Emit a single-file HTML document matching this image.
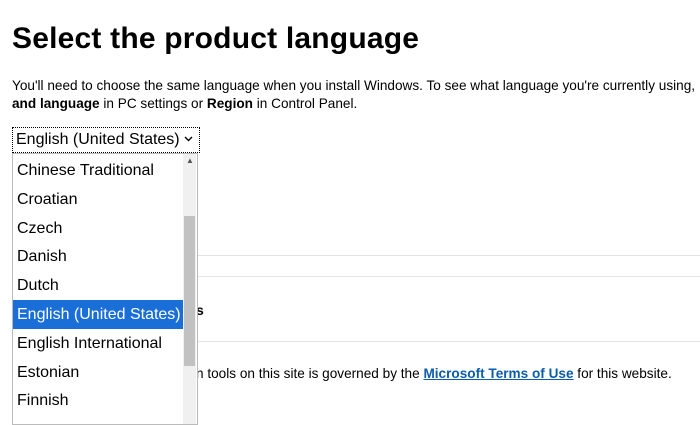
<!DOCTYPE html>
<html><head><style>
body{margin:0;width:700px;height:416px;overflow:hidden;background:#fff;font-family:"Liberation Sans",sans-serif;color:#000;position:relative}
.a{position:absolute;white-space:nowrap}
h1{position:absolute;left:12px;top:22px;margin:0;font-size:30px;font-weight:bold;letter-spacing:0.2px}
.p{font-size:13.6px}
.line{position:absolute;left:196px;right:0;height:1px;background:#e3e3e3}
.sel{position:absolute;left:12px;top:127px;width:183px;height:24px;border:1px dotted #000;font-size:16px;line-height:24px;padding-left:3px;box-sizing:content-box}
.dd{position:absolute;left:12px;top:153px;width:184px;height:270px;border:1px solid #bbb;background:#fff;overflow:hidden}
.it{height:28.8px;line-height:29px;font-size:16px;padding-left:4px;white-space:nowrap}
.hl{background:#1a6ed8;color:#fff}
.sb{position:absolute;left:170px;top:0;width:13px;height:270px;background:#f0f0f0}
.th{position:absolute;left:171px;top:62px;width:11px;height:150px;background:#c1c1c1}
</style></head><body>
<h1>Select the product language</h1>
<div class="a p" style="left:12px;top:78px;width:688px;overflow:hidden">You'll need to choose the same language when you install Windows. To see what language you're currently using,</div>
<div class="a p" style="left:12px;top:96px"><b>and language</b> in PC settings or <b>Region</b> in Control Panel.</div>
<div class="sel">English (United States) <svg width="9" height="6" viewBox="0 0 9 6" style="vertical-align:2px"><path d="M1 1l3.5 3.5L8 1" stroke="#000" stroke-width="1.4" fill="none"/></svg></div>
<div class="line" style="top:255px"></div>
<div class="line" style="top:276px"></div>
<div class="line" style="top:341px"></div>
<div class="a" style="left:196px;top:302px;font-size:14px;font-weight:bold">s</div>
<div class="a p" style="left:196px;top:366px">n tools on this site is governed by the <a style="color:#0b5cad;font-weight:bold;text-decoration:underline">Microsoft Terms of Use</a> for this website.</div>
<div class="dd">
<div class="it" style="margin-top:2px">Chinese Traditional</div>
<div class="it">Croatian</div>
<div class="it">Czech</div>
<div class="it">Danish</div>
<div class="it">Dutch</div>
<div class="it hl" style="margin-right:14px">English (United States)</div>
<div class="it">English International</div>
<div class="it">Estonian</div>
<div class="it">Finnish</div>
<div class="sb"></div><div class="th"></div>
<div class="a" style="left:173px;top:2px;font-size:8px;color:#555">&#9650;</div>
</div>
</body></html>
